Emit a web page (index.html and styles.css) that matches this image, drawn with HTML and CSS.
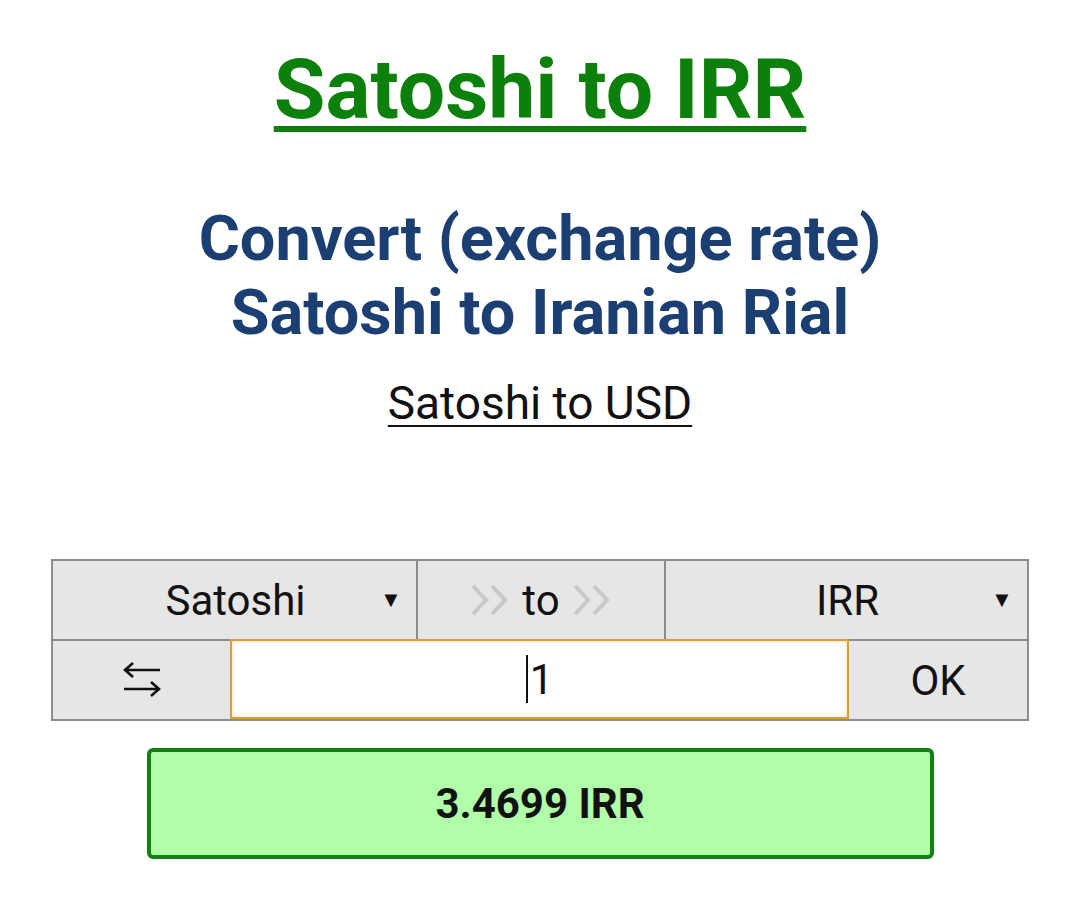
FILE: index.html
```html
<!DOCTYPE html>
<html lang="en">
<head>
    <meta charset="UTF-8">
    <meta name="viewport" content="width=device-width, initial-scale=1.0">
    <title>Satoshi to IRR</title>
    <link rel="stylesheet" href="styles.css">
</head>
<body>
    <div class="page">
        <h1><a href="#">Satoshi to IRR</a></h1>

        <h2>Convert (exchange rate)<br>Satoshi to Iranian Rial</h2>

        <p class="alt-link"><a href="#">Satoshi to USD</a></p>

        <form class="converter" id="converter">
            <div class="conv-row">
                <div class="cell pick pick-from">
                    <span class="pick-text">Satoshi</span>
                    <span class="arrow">&#9660;</span>
                </div>
                <div class="cell to-cell">
                    <svg class="chev" width="40" height="32" viewBox="0 0 40 32">
                        <path d="M3 2 L16 16 L3 30 M22 2 L35 16 L22 30" fill="none" stroke="#c8c8c8" stroke-width="4"/>
                    </svg>
                    <span>to</span>
                    <svg class="chev" width="40" height="32" viewBox="0 0 40 32">
                        <path d="M3 2 L16 16 L3 30 M22 2 L35 16 L22 30" fill="none" stroke="#c8c8c8" stroke-width="4"/>
                    </svg>
                </div>
                <div class="cell pick pick-to">
                    <span class="pick-text">IRR</span>
                    <span class="arrow">&#9660;</span>
                </div>
            </div>
            <div class="conv-row">
                <div class="cell swap">
                    <svg width="40" height="36" viewBox="0 0 40 36">
                        <path d="M38 8 H3 M11 1 L3 8 L11 15" fill="none" stroke="#111" stroke-width="2.6"/>
                        <path d="M2 27 H37 M29 20 L37 27 L29 34" fill="none" stroke="#111" stroke-width="2.6"/>
                    </svg>
                </div>
                <div class="amount"><span class="caret"></span>1</div>
                <div class="cell ok">OK</div>
            </div>
        </form>

        <div class="result">3.4699 IRR</div>
    </div>
</body>
</html>
```

FILE: styles.css
```css
body {
    font-family: Roboto, 'Liberation Sans', sans-serif;
    background: #ffffff;
    margin: 0;
    padding: 0;
    color: #111111;
}

.page {
    width: 978px;
    margin: 0 auto;
    padding-top: 40px;
    text-align: center;
}

h1 {
    margin: 0;
    font-size: 84px;
    line-height: 100px;
    font-weight: bold;
}

h1 a {
    color: #0b800b;
    text-decoration: underline;
    text-decoration-thickness: 6px;
    text-underline-offset: 8px;
}

h2 {
    margin: 62px 0 0;
    color: #1b3f73;
    font-size: 63px;
    line-height: 74px;
    font-weight: bold;
}

.alt-link {
    margin: 23px 0 0;
    font-size: 46px;
    line-height: 60px;
}

.alt-link a {
    color: #111111;
    text-decoration: underline;
    text-decoration-thickness: 2px;
    text-underline-offset: 6px;
}

.converter {
    margin-top: 126px;
    border: 2px solid #8c8c8c;
    background: #e6e6e6;
}

.conv-row {
    display: flex;
    height: 78px;
}

.conv-row + .conv-row {
    border-top: 2px solid #8c8c8c;
}

.cell {
    display: flex;
    align-items: center;
    justify-content: center;
    font-size: 42px;
    color: #111111;
}

.pick-from {
    width: 365px;
    padding: 0 20px 0 38px;
    box-sizing: border-box;
    border-right: 2px solid #8c8c8c;
}

.to-cell {
    width: 246px;
    border-right: 2px solid #8c8c8c;
    gap: 12px;
}

.pick-to {
    flex: 1;
    padding: 0 20px 0 38px;
}

.pick-text {
    flex: 1;
    text-align: center;
}

.arrow {
    font-size: 22px;
    width: 16px;
}

.swap {
    width: 177px;
}

.amount {
    width: 619px;
    box-sizing: border-box;
    background: #ffffff;
    border: 2px solid #d6a136;
    box-shadow: inset 0 0 4px #f3d9a0;
    display: flex;
    align-items: center;
    justify-content: center;
    font-size: 42px;
    margin-top: -2px;
    height: 80px;
}

.caret {
    display: inline-block;
    width: 2px;
    height: 48px;
    background: #111111;
    margin-right: 2px;
}

.ok {
    flex: 1;
}

.result {
    width: 787px;
    box-sizing: border-box;
    margin: 27px auto 0;
    height: 111px;
    background: #b0ffa8;
    border: 4px solid #128012;
    border-radius: 6px;
    display: flex;
    align-items: center;
    justify-content: center;
    font-size: 42px;
    font-weight: bold;
    color: #111111;
}
```
